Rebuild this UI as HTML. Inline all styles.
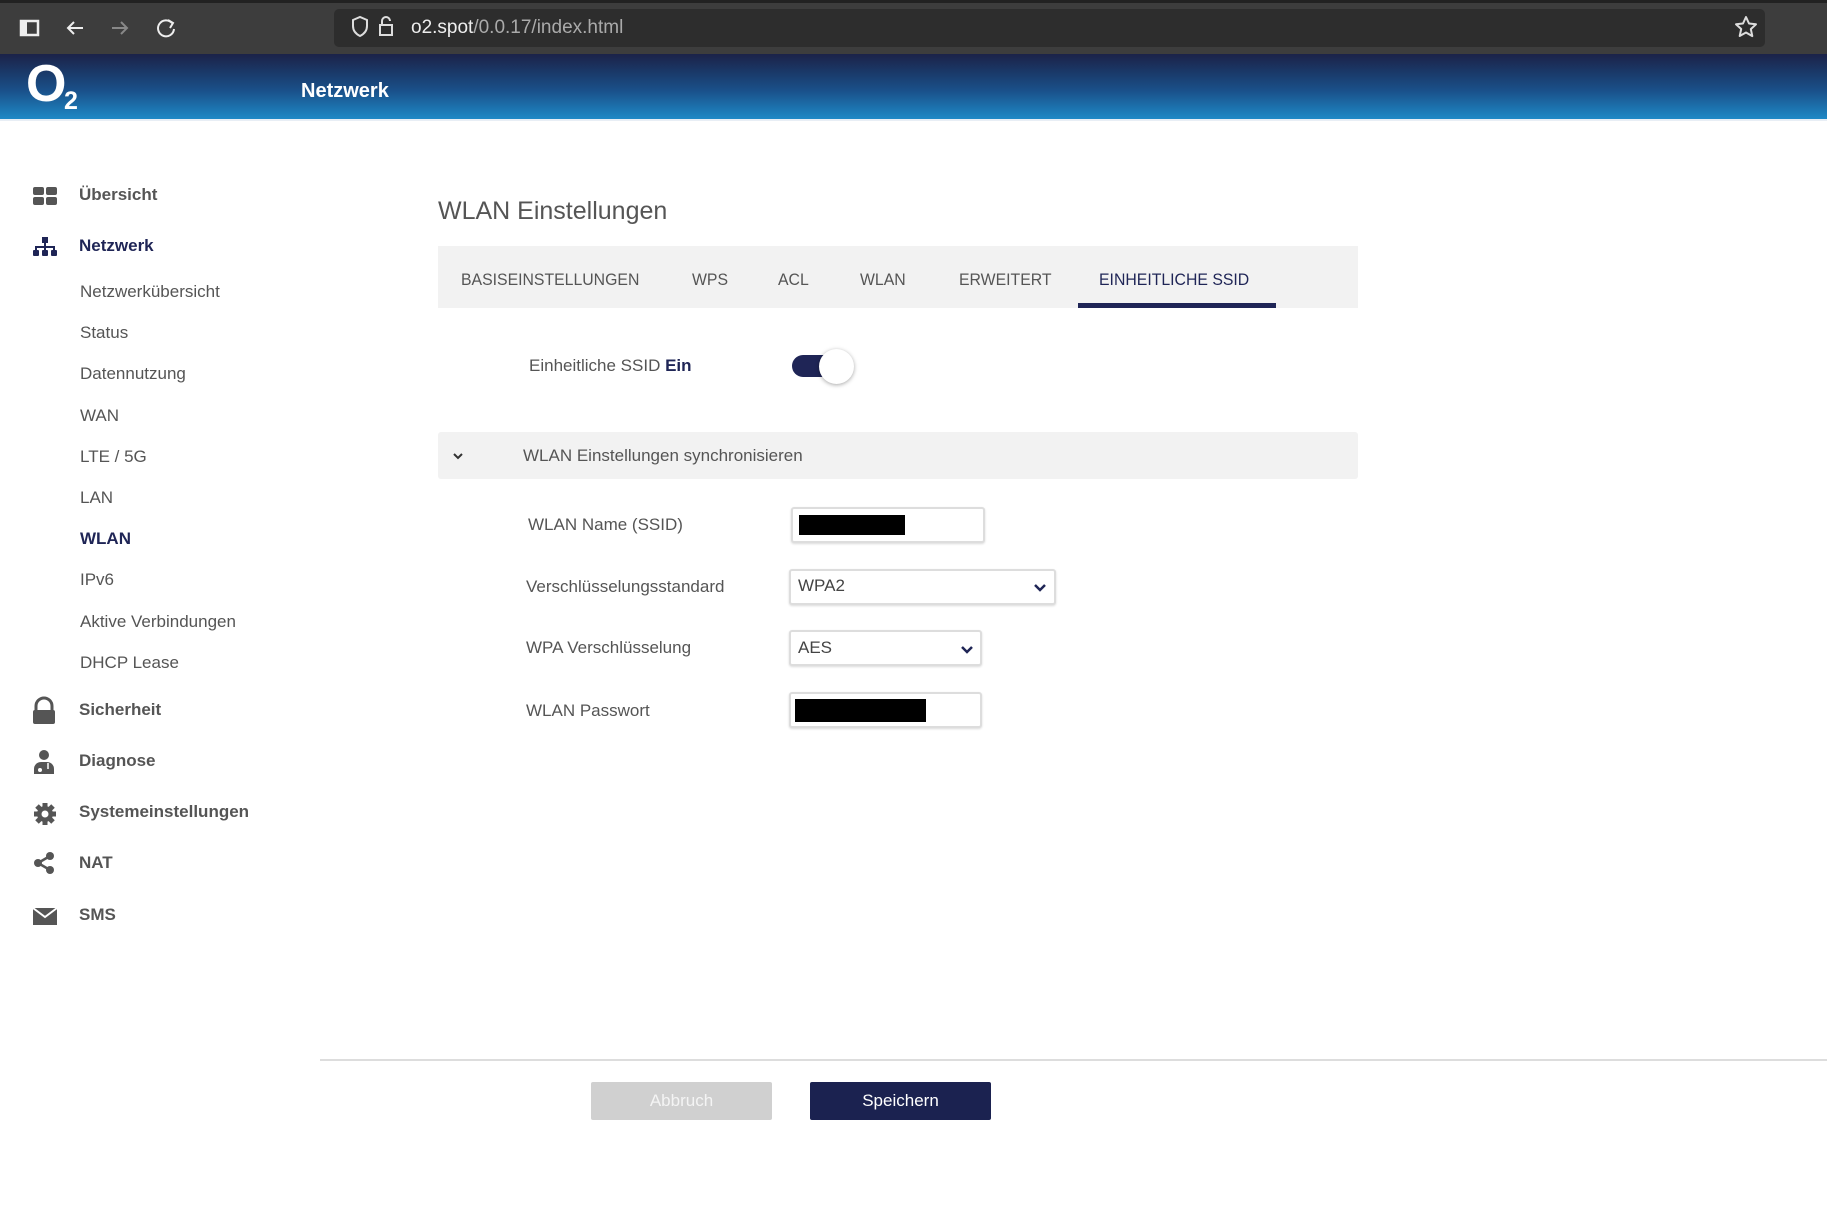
<!DOCTYPE html>
<html><head><meta charset="utf-8"><style>
*{margin:0;padding:0;box-sizing:border-box}
body{width:1827px;height:1210px;overflow:hidden;background:#fff;font-family:"Liberation Sans",sans-serif;position:relative;color:#555}
.a{position:absolute;white-space:nowrap}
.nav{font-size:17px;color:#555;line-height:20px}
.main{font-weight:bold;color:#555;font-size:17px;line-height:20px}
.tab{font-size:17px;color:#555;top:270px;line-height:20px;transform:scaleX(.93);transform-origin:left}
.lbl{font-size:17px;color:#555;line-height:20px}
.box{position:absolute;border:2px solid #ddd;border-radius:3px;background:#fff;box-shadow:0 1px 2px rgba(0,0,0,.15)}
</style></head><body>
<div class="a" style="left:0;top:0;width:1827px;height:54px;background:#3d3d3d;border-top:3px solid #222"></div>
<div class="a" style="left:334px;top:9px;width:1431px;height:38px;background:#2d2d2d;border-radius:5px"></div>
<svg class="a" style="left:0;top:0" width="420" height="54">
<rect x="21" y="21" width="17" height="14" fill="none" stroke="#eee" stroke-width="2.5"/>
<rect x="21" y="21" width="6" height="14" fill="#eee"/>
<path d="M83 28H68M74 22l-6 6 6 6" stroke="#eee" stroke-width="2" fill="none"/>
<path d="M112 28h15M121 22l6 6-6 6" stroke="#888" stroke-width="2" fill="none"/>
<path d="M172 23a8 8 0 1 0 2 6M168 20l5 3-3 5" stroke="#eee" stroke-width="2" fill="none"/>
<path d="M353 20l7-3 7 3v6c0 5-3 8-7 10-4-2-7-5-7-10z" stroke="#ddd" stroke-width="2" fill="none"/>
<rect x="380" y="25" width="12" height="10" fill="none" stroke="#ddd" stroke-width="2"/>
<path d="M382 25v-4a4 4 0 0 1 8 0" stroke="#ddd" stroke-width="2" fill="none"/>
</svg>
<div class="a" style="left:411px;top:16px;font-size:19px;color:#eee;line-height:24px">o2.spot<span style="color:#aaa">/0.0.17/index.html</span></div>
<svg class="a" style="left:1734px;top:15px" width="24" height="24"><path d="M12 2l3 6.5 7 .8-5.2 4.8 1.5 7L12 17.5 5.7 21l1.5-7L2 9.3l7-.8z" fill="none" stroke="#ddd" stroke-width="2" stroke-linejoin="round"/></svg>
<div class="a" style="left:0;top:54px;width:1827px;height:65px;background:linear-gradient(#1b2248,#1a4f88 55%,#1e89c6)"></div>
<div class="a" style="left:0;top:119px;width:1827px;height:2px;background:#e8eef5"></div>
<div class="a" style="left:26px;top:56px;font-size:52px;color:#fff;line-height:56px;font-weight:bold">O</div>
<div class="a" style="left:64px;top:88px;font-size:25px;color:#fff;line-height:26px;font-weight:bold">2</div>
<div class="a" style="left:301px;top:80px;font-size:20px;color:#fff;font-weight:bold;line-height:22px">Netzwerk</div>
<svg class="a" style="left:30px;top:180px" width="32" height="760" fill="#555">
<rect x="3" y="7" width="11" height="8" rx="2"/><rect x="16" y="7" width="11" height="8" rx="2"/><rect x="3" y="17" width="11" height="8" rx="2"/><rect x="16" y="17" width="11" height="8" rx="2"/>
<g fill="#1f2556"><rect x="12" y="57" width="6" height="6"/><rect x="14" y="62" width="2" height="5"/><rect x="5" y="66" width="20" height="2"/><rect x="5" y="66" width="2" height="4"/><rect x="23" y="66" width="2" height="4"/><rect x="14" y="66" width="2" height="4"/><rect x="3" y="70" width="6" height="6" rx="1"/><rect x="12" y="70" width="6" height="6" rx="1"/><rect x="21" y="70" width="6" height="6" rx="1"/></g>
<path d="M6 531v-5a8 8 0 0 1 16 0v5" stroke="#555" stroke-width="3" fill="none"/><rect x="3" y="530" width="22" height="14" rx="2"/>
<circle cx="14" cy="575" r="5"/><path d="M4 594v-5a7 7 0 0 1 7-7h6a7 7 0 0 1 7 7v5z"/><circle cx="10" cy="590" r="2" fill="#fff"/><path d="M18 583v6" stroke="#fff" stroke-width="1.5"/>
<g transform="translate(15 634)"><circle r="8"/><g stroke="#555" stroke-width="5"><path d="M0-11V11M-11 0H11M-8-8L8 8M8-8L-8 8"/></g><circle r="3.5" fill="#fff"/></g>
<circle cx="20" cy="676" r="4"/><circle cx="8" cy="683" r="4"/><circle cx="20" cy="690" r="4"/><path d="M20 676L8 683 20 690" stroke="#555" stroke-width="2.5" fill="none"/>
<path d="M3 728h24v17H3z"/><path d="M3 728l12 9 12-9" stroke="#fff" stroke-width="2" fill="none"/>
</svg>
<div class="a main" style="left:79px;top:185px">Übersicht</div>
<div class="a main" style="left:79px;top:236px;color:#1f2556">Netzwerk</div>
<div class="a nav" style="left:80px;top:282px">Netzwerkübersicht</div>
<div class="a nav" style="left:80px;top:323px">Status</div>
<div class="a nav" style="left:80px;top:364px">Datennutzung</div>
<div class="a nav" style="left:80px;top:406px">WAN</div>
<div class="a nav" style="left:80px;top:447px">LTE / 5G</div>
<div class="a nav" style="left:80px;top:488px">LAN</div>
<div class="a nav" style="left:80px;top:529px;font-weight:bold;color:#1f2556">WLAN</div>
<div class="a nav" style="left:80px;top:570px">IPv6</div>
<div class="a nav" style="left:80px;top:612px">Aktive Verbindungen</div>
<div class="a nav" style="left:80px;top:653px">DHCP Lease</div>
<div class="a main" style="left:79px;top:700px">Sicherheit</div>
<div class="a main" style="left:79px;top:751px">Diagnose</div>
<div class="a main" style="left:79px;top:802px">Systemeinstellungen</div>
<div class="a main" style="left:79px;top:853px">NAT</div>
<div class="a main" style="left:79px;top:905px">SMS</div>
<div class="a" style="left:438px;top:196px;font-size:25px;color:#555;line-height:30px">WLAN Einstellungen</div>
<div class="a" style="left:438px;top:246px;width:920px;height:62px;background:#f2f2f2"></div>
<div class="a tab" style="left:461px">BASISEINSTELLUNGEN</div>
<div class="a tab" style="left:692px">WPS</div>
<div class="a tab" style="left:778px">ACL</div>
<div class="a tab" style="left:860px">WLAN</div>
<div class="a tab" style="left:959px">ERWEITERT</div>
<div class="a tab" style="left:1099px;color:#1f2556">EINHEITLICHE SSID</div>
<div class="a" style="left:1078px;top:303px;width:198px;height:5px;background:#1f2556"></div>
<div class="a lbl" style="left:529px;top:356px">Einheitliche SSID <b style="color:#1f2556">Ein</b></div>
<div class="a" style="left:792px;top:355px;width:50px;height:22px;border-radius:11px;background:#1f2556"></div>
<div class="a" style="left:819px;top:349px;width:35px;height:35px;border-radius:50%;background:#fff;box-shadow:0 1px 4px rgba(0,0,0,.35)"></div>
<div class="a" style="left:438px;top:432px;width:920px;height:47px;background:#f2f2f2;border-radius:3px"></div>
<svg class="a" style="left:452px;top:451px" width="12" height="10"><path d="M2 3l4 4 4-4" stroke="#333" stroke-width="2" fill="none"/></svg>
<div class="a lbl" style="left:523px;top:446px">WLAN Einstellungen synchronisieren</div>
<div class="a lbl" style="left:528px;top:515px">WLAN Name (SSID)</div>
<div class="box" style="left:791px;top:507px;width:194px;height:36px"></div>
<div class="a" style="left:799px;top:515px;width:106px;height:20px;background:#000"></div>
<div class="a lbl" style="left:526px;top:577px">Verschlüsselungsstandard</div>
<div class="box" style="left:789px;top:569px;width:267px;height:36px"></div>
<div class="a lbl" style="left:798px;top:576px;color:#444">WPA2</div>
<svg class="a" style="left:1033px;top:582px" width="14" height="12"><path d="M2 3l5 5 5-5" stroke="#1f2556" stroke-width="2.5" fill="none"/></svg>
<div class="a lbl" style="left:526px;top:638px">WPA Verschlüsselung</div>
<div class="box" style="left:789px;top:630px;width:193px;height:36px"></div>
<div class="a lbl" style="left:798px;top:638px;color:#444">AES</div>
<svg class="a" style="left:960px;top:644px" width="14" height="12"><path d="M2 3l5 5 5-5" stroke="#1f2556" stroke-width="2.5" fill="none"/></svg>
<div class="a lbl" style="left:526px;top:701px">WLAN Passwort</div>
<div class="box" style="left:789px;top:692px;width:193px;height:36px"></div>
<div class="a" style="left:795px;top:699px;width:131px;height:23px;background:#000"></div>
<div class="a" style="left:320px;top:1059px;width:1507px;height:2px;background:#ddd"></div>
<div class="a" style="left:591px;top:1082px;width:181px;height:38px;background:#d0d0d0;border-radius:2px;color:#f4f4f4;font-size:17px;text-align:center;line-height:38px">Abbruch</div>
<div class="a" style="left:810px;top:1082px;width:181px;height:38px;background:#1b2250;border-radius:2px;color:#fff;font-size:17px;text-align:center;line-height:38px">Speichern</div>
</body></html>
